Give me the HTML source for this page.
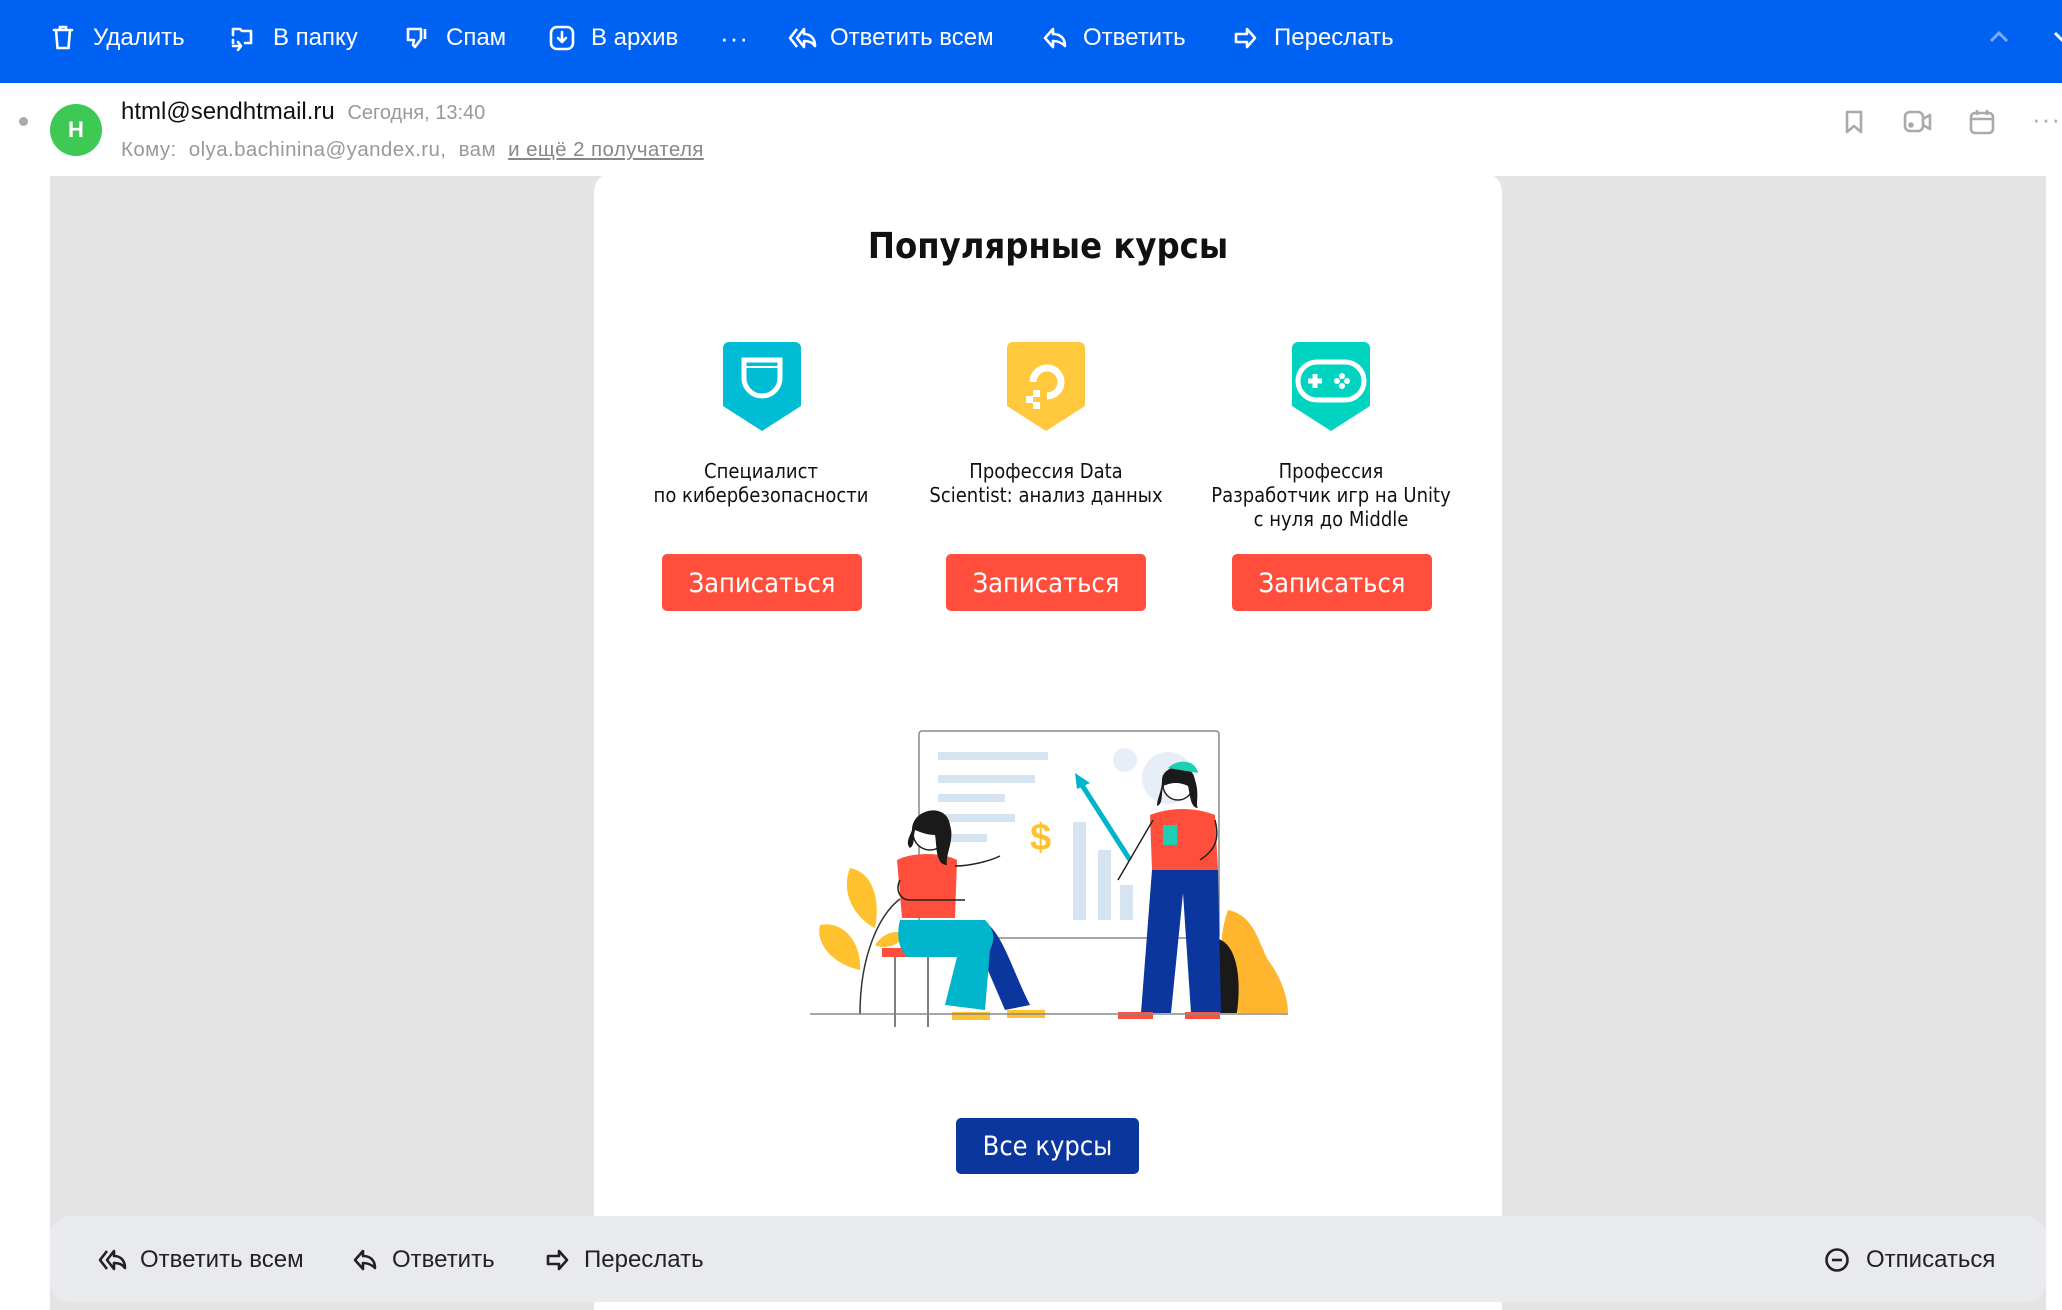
<!DOCTYPE html>
<html><head><meta charset="utf-8"><style>
*{margin:0;padding:0;box-sizing:border-box}
body{width:2062px;height:1310px;overflow:hidden;background:#fff;font-family:"Liberation Sans",sans-serif;position:relative}
.abs{position:absolute}
.tb{position:absolute;left:0;top:0;width:2062px;height:83px;background:#0062f3}
.ti{position:absolute;top:0;height:83px;line-height:76px;color:#fff;font-size:24px;white-space:nowrap}
.ti svg{position:absolute;top:25px}
.gray{position:absolute;left:50px;top:176px;width:1996px;height:1134px;background:#e4e4e4}
.card{position:absolute;left:594px;top:172px;width:908px;height:1138px;background:#fff;border-radius:20px 20px 0 0}
.ct{position:absolute;width:260px;text-align:center;font-size:20px;line-height:24px;color:#111;font-family:"DejaVu Sans Condensed","Liberation Sans",sans-serif}
.btn{position:absolute;width:200px;height:57px;background:#ff4f3c;border-radius:5px;color:#fff;font-size:27px;line-height:59px;text-align:center;font-family:"DejaVu Sans Condensed","Liberation Sans",sans-serif}
.bar{position:absolute;left:50px;top:1216px;width:1996px;height:86px;background:#e9eaee;border-radius:20px}
.bi{position:absolute;top:0;height:86px;line-height:88px;font-size:24px;color:#222;white-space:nowrap}
</style></head><body>
<div class="tb">
 <div class="ti" style="left:52px"><svg width="22" height="26" viewBox="0 0 22 26" fill="none" stroke="#fff" stroke-width="2.6" stroke-linecap="round"><path d="M2 5h18M8 5V2h6v3M4 5l1.5 18h11L18 5"/></svg><span style="margin-left:41px">Удалить</span></div>
 <div class="ti" style="left:230px"><svg width="26" height="26" viewBox="0 0 26 26" fill="none" stroke="#fff" stroke-width="2.6" stroke-linecap="round" stroke-linejoin="round"><path d="M3 10V4h7l2 2h9v12h-6M3 15v3M3 21h8M8 17l3 4-3 4"/></svg><span style="margin-left:43px">В папку</span></div>
 <div class="ti" style="left:404px"><svg width="26" height="26" viewBox="0 0 26 26" fill="none" stroke="#fff" stroke-width="2.6" stroke-linejoin="round"><path d="M4 4h13v10l-6 8-2-2 1-5H4zM21 4v10"/></svg><span style="margin-left:42px">Спам</span></div>
 <div class="ti" style="left:549px"><svg width="26" height="26" viewBox="0 0 26 26" fill="none" stroke="#fff" stroke-width="2.6" stroke-linecap="round" stroke-linejoin="round"><rect x="2" y="2" width="22" height="22" rx="6"/><path d="M13 7v10M9 13l4 4 4-4"/></svg><span style="margin-left:42px">В архив</span></div>
 <div class="ti" style="left:720px;font-size:26px;letter-spacing:1px">···</div>
 <div class="ti" style="left:788px"><svg width="30" height="26" viewBox="0 0 30 26" fill="none" stroke="#fff" stroke-width="2.6" stroke-linejoin="round"><path d="M9 4L2 13l7 9M16 4L9 13l7 9v-6c5 0 9 2 11 5 0-7-4-12-11-12z"/></svg><span style="margin-left:42px">Ответить всем</span></div>
 <div class="ti" style="left:1042px"><svg width="26" height="26" viewBox="0 0 26 26" fill="none" stroke="#fff" stroke-width="2.6" stroke-linejoin="round"><path d="M11 4L3 13l8 9v-6c5 0 9 2 12 5 0-7-4-12-12-12z"/></svg><span style="margin-left:41px">Ответить</span></div>
 <div class="ti" style="left:1232px"><svg width="26" height="26" viewBox="0 0 26 26" fill="none" stroke="#fff" stroke-width="2.6" stroke-linejoin="round"><path d="M15 4l8 9-8 9v-5H4V9h11z"/></svg><span style="margin-left:42px">Переслать</span></div>
 <svg class="abs" style="left:1988px;top:30px" width="22" height="14" viewBox="0 0 22 14" fill="none" stroke="#7fa8f7" stroke-width="3"><path d="M3 11l8-8 8 8"/></svg>
 <svg class="abs" style="left:2052px;top:30px" width="14" height="14" viewBox="0 0 14 14" fill="none" stroke="#fff" stroke-width="3"><path d="M3 3l8 8"/></svg>
</div>
<div class="abs" style="left:19px;top:117px;width:9px;height:9px;border-radius:50%;background:#aaa"></div>
<div class="abs" style="left:50px;top:104px;width:52px;height:52px;border-radius:50%;background:#3dc954;color:#fff;font-weight:bold;font-size:22px;line-height:52px;text-align:center">H</div>
<div class="abs" style="left:121px;top:98px;font-size:24px;color:#111;white-space:nowrap">html@sendhtmail.ru <span style="font-size:20px;color:#999;margin-left:6px">Сегодня, 13:40</span></div>
<div class="abs" style="left:121px;top:138px;font-size:20.5px;letter-spacing:0.4px;color:#999;white-space:nowrap">Кому:&nbsp; olya.bachinina@yandex.ru,&nbsp; вам&nbsp; <span style="text-decoration:underline;color:#888">и ещё 2 получателя</span></div>
<svg class="abs" style="left:1843px;top:109px" width="22" height="26" viewBox="0 0 22 26" fill="none" stroke="#aaa" stroke-width="2.6" stroke-linejoin="round"><path d="M4 3h14v20l-7-6-7 6z"/></svg>
<svg class="abs" style="left:1903px;top:109px" width="30" height="26" viewBox="0 0 30 26" fill="none" stroke="#aaa" stroke-width="2.6" stroke-linejoin="round"><rect x="2" y="3" width="18" height="19" rx="5"/><path d="M20 10l7-4v14l-7-4"/><circle cx="8" cy="16" r="1.5" fill="#aaa"/></svg>
<svg class="abs" style="left:1968px;top:108px" width="28" height="28" viewBox="0 0 28 28" fill="none" stroke="#aaa" stroke-width="2.6"><rect x="3" y="5" width="22" height="20" rx="4"/><path d="M3 11h22M9 2v5M19 2v5"/></svg>
<div class="abs" style="left:2032px;top:104px;font-size:26px;color:#aaa;letter-spacing:1px">···</div>

<div class="gray"></div>
<div class="card"></div>
<div class="abs" style="left:594px;top:226px;width:908px;text-align:center;font-size:36px;font-weight:bold;color:#111;font-family:'DejaVu Sans Condensed','Liberation Sans',sans-serif">Популярные курсы</div>

<svg class="abs" style="left:723px;top:342px" width="78" height="89" viewBox="0 0 78 89"><path d="M0 6a6 6 0 0 1 6-6h66a6 6 0 0 1 6 6v58L39 89 0 64z" fill="#00bcd4"/><path d="M21 18h36v18a18 18 0 0 1-36 0z" fill="none" stroke="#fff" stroke-width="5"/><path d="M21 25h36" stroke="#fff" stroke-width="2"/></svg>
<svg class="abs" style="left:1007px;top:342px" width="78" height="89" viewBox="0 0 78 89"><path d="M0 6a6 6 0 0 1 6-6h66a6 6 0 0 1 6 6v58L39 89 0 64z" fill="#ffc83d"/><path d="M26 40a14 14 0 1 1 14 14" fill="none" stroke="#fff" stroke-width="7"/><rect x="26" y="48" width="7" height="7" fill="#fff"/><rect x="19" y="54" width="7" height="7" fill="#fff"/><rect x="26" y="60" width="7" height="7" fill="#fff"/></svg>
<svg class="abs" style="left:1292px;top:342px" width="78" height="89" viewBox="0 0 78 89"><path d="M0 6a6 6 0 0 1 6-6h66a6 6 0 0 1 6 6v58L39 89 0 64z" fill="#00d4c0"/><rect x="6" y="20" width="66" height="38" rx="19" fill="none" stroke="#fff" stroke-width="5"/><path d="M16 39h14M23 32v14" stroke="#fff" stroke-width="5"/><circle cx="50" cy="34" r="3" fill="#fff"/><circle cx="50" cy="44" r="3" fill="#fff"/><circle cx="45" cy="39" r="3" fill="#fff"/><circle cx="55" cy="39" r="3" fill="#fff"/></svg>

<div class="ct" style="left:631px;top:459px">Специалист<br>по кибербезопасности</div>
<div class="ct" style="left:916px;top:459px">Профессия Data<br>Scientist: анализ данных</div>
<div class="ct" style="left:1201px;top:459px">Профессия<br>Разработчик игр на Unity<br>с нуля до Middle</div>
<div class="btn" style="left:662px;top:554px">Записаться</div>
<div class="btn" style="left:946px;top:554px">Записаться</div>
<div class="btn" style="left:1232px;top:554px">Записаться</div>

<svg class="abs" style="left:800px;top:720px" width="500" height="320" viewBox="0 0 500 320">
<rect x="119" y="11" width="300" height="207" rx="3" fill="#fff" stroke="#888" stroke-width="1.5"/>
<g fill="#d6e3f0"><rect x="138" y="32" width="110" height="8"/><rect x="138" y="55" width="97" height="8"/><rect x="138" y="74" width="67" height="8"/><rect x="138" y="94" width="77" height="8"/><rect x="145" y="114" width="42" height="8"/><rect x="273" y="102" width="13" height="98"/><rect x="298" y="130" width="13" height="70"/><rect x="320" y="165" width="13" height="35"/></g>
<circle cx="325" cy="40" r="12" fill="#e8eef7"/><circle cx="368" cy="58" r="26" fill="#e8eef7"/>
<text x="230" y="130" font-family="Liberation Sans" font-weight="bold" font-size="38" fill="#ffc12e">$</text>
<path d="M330 140L280 62" stroke="#00b4cc" stroke-width="5"/><path d="M275 53l15 10-13 6z" fill="#00b4cc"/>
<path d="M50 148c25 5 30 35 25 60-20-10-35-35-25-60zM20 205c25-5 42 20 40 45-25-5-45-25-40-45zM75 225c10-15 25-15 30-10-5 10-20 15-30 10z" fill="#ffc12e"/>
<path d="M60 294c0-60 20-100 40-115" stroke="#333" fill="none" stroke-width="1.5"/>
<path d="M428 190c25 5 30 30 40 50 15 20 20 40 20 53h-50c-10-40-25-60-10-103z" fill="#ffb52e"/>
<path d="M412 218c25 0 30 40 25 75h-22c5-25-10-45-3-75z" fill="#1a1a1a"/>
<rect x="82" y="228" width="75" height="9" fill="#ff4f3c"/>
<path d="M95 237v70M128 237v70" stroke="#555" stroke-width="1.5"/>
<path d="M182 200c20 10 30 50 48 85l-25 5-30-70z" fill="#0a369d"/>
<path d="M100 200h85c10 10 10 20 5 30l-5 60-40-5 12-48h-50c-10-10-10-25-7-37z" fill="#00b4cc"/>
<path d="M97 140c15-8 45-8 60 0l-2 58H102z" fill="#ff4f3c"/>
<path d="M155 146c15 0 35-5 45-10M100 160c-5 10 0 20 10 20h55" stroke="#222" stroke-width="1.5" fill="none"/>
<circle cx="130" cy="113" r="17" fill="#fff" stroke="#222" stroke-width="1.5"/>
<path d="M112 110c0-22 35-28 38-5 5 15-5 30-3 40-12 0-10-20-12-30-8 0-15-3-20-5-2 8 0 15-5 18-5-5 0-12 2-18z" fill="#1a1a1a"/>
<path d="M152 292h38v8h-38zM207 290h38v8h-38z" fill="#ffc12e"/>
<circle cx="378" cy="65" r="15" fill="#fff" stroke="#222" stroke-width="1.5"/>
<path d="M362 60c0-15 30-20 33 0 5 15 0 25 3 28-8 0-8-15-10-22-10-5-18-3-25 0-2 10 0 18-6 20 0-8 5-15 5-26z" fill="#1a1a1a"/>
<path d="M368 48c10-10 28-8 30 5z" fill="#1fcfb5"/>
<path d="M350 95c20-8 45-8 65 0l3 55h-66z" fill="#ff4f3c"/>
<path d="M353 100l-35 60M415 100c5 20 0 30-15 40" stroke="#222" stroke-width="1.5" fill="none"/>
<path d="M352 150h66l3 143h-30l-8-120-12 120h-30z" fill="#0a369d"/>
<path d="M318 292h35v7h-35zM385 292h35v7h-35z" fill="#ff4f3c"/>
<rect x="363" y="105" width="14" height="20" fill="#1fcfb5"/>
<path d="M10 294h478" stroke="#888" stroke-width="1.5"/>
</svg>

<div class="abs" style="left:956px;top:1118px;width:183px;height:56px;background:#0a369d;border-radius:5px;color:#fff;font-size:27px;line-height:58px;text-align:center;font-family:'DejaVu Sans Condensed','Liberation Sans',sans-serif">Все курсы</div>

<div class="bar">
 <div class="bi" style="left:48px"><svg style="position:absolute;top:31px" width="30" height="26" viewBox="0 0 30 26" fill="none" stroke="#222" stroke-width="2.6" stroke-linejoin="round"><path d="M9 4L2 13l7 9M16 4L9 13l7 9v-6c5 0 9 2 11 5 0-7-4-12-11-12z"/></svg><span style="margin-left:42px">Ответить всем</span></div>
 <div class="bi" style="left:302px"><svg style="position:absolute;top:31px" width="26" height="26" viewBox="0 0 26 26" fill="none" stroke="#222" stroke-width="2.6" stroke-linejoin="round"><path d="M11 4L3 13l8 9v-6c5 0 9 2 12 5 0-7-4-12-12-12z"/></svg><span style="margin-left:40px">Ответить</span></div>
 <div class="bi" style="left:494px"><svg style="position:absolute;top:31px" width="26" height="26" viewBox="0 0 26 26" fill="none" stroke="#222" stroke-width="2.6" stroke-linejoin="round"><path d="M15 4l8 9-8 9v-5H4V9h11z"/></svg><span style="margin-left:40px">Переслать</span></div>
 <div class="bi" style="left:1774px"><svg style="position:absolute;top:31px" width="26" height="26" viewBox="0 0 26 26" fill="none" stroke="#222" stroke-width="2.6"><circle cx="13" cy="13" r="10.5"/><path d="M8 13h10"/></svg><span style="margin-left:42px">Отписаться</span></div>
</div>
</body></html>
